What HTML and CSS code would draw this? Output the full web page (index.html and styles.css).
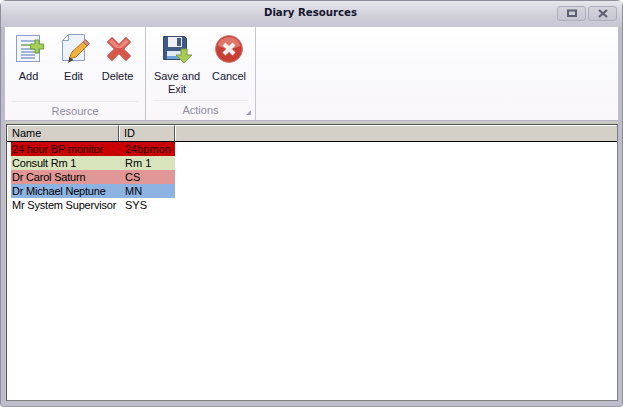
FILE: index.html
```html
<!DOCTYPE html>
<html lang="en">
<head>
<meta charset="utf-8">
<title>Diary Resources</title>
<link rel="stylesheet" href="styles.css">
</head>
<body>
<div class="window">
  <header class="titlebar">
    <div class="title">Diary Resources</div>
    <div class="controls">
      <button class="ctl" aria-label="Maximize"><svg width="12" height="9" viewBox="0 0 12 9"><rect x="2" y="1.500" width="8" height="5.500" fill="none" stroke="#5c6072" stroke-width="2"/></svg></button>
      <button class="ctl" aria-label="Close"><svg width="12" height="9" viewBox="0 0 12 9"><path d="M2 1l8 7M10 1L2 8" stroke="#5c6072" stroke-width="2.2" fill="none"/></svg></button>
    </div>
  </header>
  <div class="client">
    <section class="ribbon">
      <div class="group group-resource">
        <div class="items">
          <div class="item item-add">
            <svg class="icon" width="28" height="28" viewBox="0 0 28 28">
              <rect x="0.500" y="0.500" width="23" height="26" fill="#f3f6fc" stroke="#8a9fca"/>
              <path d="M5 6h14M5 14h14M5 17h14M5 20h14M5 23h14" stroke="#8ba0ce" stroke-width="1.300"/>
              <path d="M5 10h12" stroke="#5a9a3a" stroke-width="1.300"/>
              <path d="M19 5h4v4h4.500v5H23v4h-4v-4h-4.500V9H19z" fill="#a4d05a" stroke="#6d9a3a"/>
            </svg>
            <span class="label">Add</span>
          </div>
          <div class="item item-edit">
            <svg class="icon" width="28" height="30" viewBox="0 0 28 30">
              <path d="M6.500 0.500H22.500V26.500H0.500V6.500z" fill="#eef3fb" stroke="#8a9fca"/>
              <path d="M6.500 0.500v6h-6z" fill="#fff" stroke="#8a9fca"/>
              <path d="M7 25l3-7L21 8l4 4-11 11z" fill="#f2b23e" stroke="#a8742a"/>
              <path d="M21 8l2.500-2.500 4 4L25 12z" fill="#dc8a80" stroke="#a07060"/>
              <path d="M6 29l1.500-6 4 3z" fill="#444"/>
            </svg>
            <span class="label">Edit</span>
          </div>
          <div class="item item-delete">
            <svg class="icon" width="26" height="26" viewBox="0 0 26 26">
              <path d="M1 6l5-5 7 7 7-7 5 5-7 7 7 7-5 5-7-7-7 7-5-5 7-7z" fill="#d9574a" stroke="#c9867d"/>
              <path d="M3 6l3-3 7 7 7-7 3 3-7 6h-6z" fill="#e9877a"/>
            </svg>
            <span class="label">Delete</span>
          </div>
        </div>
        <div class="caption">Resource</div>
      </div>
      <div class="group group-actions">
        <div class="items">
          <div class="item item-save">
            <svg class="icon" width="30" height="27" viewBox="0 0 30 27">
              <path d="M0.500 0.500h21l2 2v21h-23z" fill="#3f5a85" stroke="#34476a"/>
              <rect x="5" y="1" width="14" height="10" fill="#eef0f4"/>
              <rect x="14" y="2" width="4" height="8" fill="#3f5a85"/>
              <rect x="4" y="15" width="17" height="8" fill="#dfe8f3"/>
              <path d="M4 20h17v3H4z" fill="#6ea4dc"/>
              <path d="M18 13h6v6h5l-8 8-8-8h5z" fill="#a6cc55" stroke="#7a9c42"/>
            </svg>
            <span class="label">Save and<br>Exit</span>
          </div>
          <div class="item item-cancel">
            <svg class="icon" width="28" height="28" viewBox="0 0 28 28">
              <circle cx="14" cy="14" r="13.500" fill="#c93f36" stroke="#c9817a"/>
              <path d="M3 11a11 9 0 0 1 22 0a14 6 0 0 1-22 0z" fill="#e0756a"/>
              <path d="M7.500 10.500l3-3 3.500 3.500 3.500-3.500 3 3-3.500 3.500 3.500 3.500-3 3-3.500-3.500-3.500 3.500-3-3 3.500-3.500z" fill="#f4eeee"/>
            </svg>
            <span class="label">Cancel</span>
          </div>
        </div>
        <div class="caption">Actions<span class="launcher"></span></div>
      </div>
    </section>
    <section class="grid">
      <div class="head">
        <div class="hcell col-name">Name</div>
        <div class="hcell col-id">ID</div>
        <div class="hcell col-rest"></div>
      </div>
      <div class="rows">
        <div class="row row-red"><span class="cell-name">24 hour BP monitor</span><span class="cell-id">24bpmon</span></div>
        <div class="row row-green"><span class="cell-name">Consult Rm 1</span><span class="cell-id">Rm 1</span></div>
        <div class="row row-pink"><span class="cell-name">Dr Carol Saturn</span><span class="cell-id">CS</span></div>
        <div class="row row-blue"><span class="cell-name">Dr Michael Neptune</span><span class="cell-id">MN</span></div>
        <div class="row"><span class="cell-name">Mr System Supervisor</span><span class="cell-id">SYS</span></div>
      </div>
    </section>
  </div>
</div>
</body>
</html>
```
FILE: styles.css
```css
* { box-sizing: border-box; }
html, body { margin: 0; padding: 0; }
body { width: 623px; height: 407px; overflow: hidden; background: #fff; font-family: "Liberation Sans", sans-serif; font-size: 11px; color: #000; }
.window { width: 623px; height: 407px; display: flex; flex-direction: column; background: #bdbcca; border-radius: 6px 6px 4px 4px; padding: 0 4px 5px 4px; border: 1px solid #8f8f9a; border-bottom-color: #9a9aa6; }
.titlebar { height: 26px; flex: none; display: flex; align-items: center; justify-content: flex-end; position: relative; background: linear-gradient(#e6e6ec, #cfced9 60%, #c6c5d2); margin: 0 -4px; padding: 0 4px 0 0; }
.title { position: absolute; left: -1px; right: 1px; top: 6px; text-align: center; font-family: "DejaVu Sans", sans-serif; font-weight: bold; font-size: 10.200px; color: #15152e; }
.controls { display: flex; gap: 2px; margin-right: 1px; margin-top: -1px; }
.ctl { width: 29px; height: 15px; padding: 0; display: flex; align-items: center; justify-content: center; border: 1px solid #aeaeba; border-radius: 3px; background: linear-gradient(#d4d4dc, #c6c6d2); }
.client { flex: 1; display: flex; flex-direction: column; min-height: 0; background: #c9c8c4; }
.ribbon { height: 94px; flex: none; display: flex; background: linear-gradient(#fff 0, #f9f9fe 50%, #fbf6fa 100%); border-bottom: 1px solid #b5b4c0; }
.group { display: flex; flex-direction: column; border-right: 1px solid #c6c6d0; }
.group-resource { width: 141px; }
.group-actions { width: 110px; }
.items { flex: 1; display: flex; padding-top: 7px; }
.item { display: flex; flex-direction: column; align-items: center; text-align: center; }
.item-add { width: 45px; margin-left: 1px; }
.item-edit { width: 45px; }
.item-delete { width: 45px; margin-left: -1px; }
.item-save { width: 60px; margin-left: 1px; }
.item-cancel { width: 44px; }
.icon { display: block; flex: none; }
.item-add .icon { margin: 1px 0 1px 3px; }
.item-edit .icon { margin-left: 4px; }
.item-delete .icon { margin: 2px 0 2px 3px; }
.item-save .icon { margin: 2px 0 1px 2px; }
.item-cancel .icon { margin: 1px 1px 1px 0; }
.label { margin-top: 6px; line-height: 13px; font-size: 11px; letter-spacing: -0.050px; color: #15152e; }
.caption { height: 20px; margin: 0 7px; border-top: 1px solid #e8e8ee; text-align: center; font-size: 11px; line-height: 19px; color: #8c8c9e; position: relative; }
.group-resource .caption { height: 19px; }
.launcher { position: absolute; right: -3px; bottom: 5px; width: 0; height: 0; border-style: solid; border-width: 0 0 5px 5px; border-color: transparent transparent #a0a0ae transparent; }
.grid { flex: 1; min-height: 0; margin-top: 3px; background: #fff; border: 1px solid #7f7f7f; border-left-color: #55554f; border-top-color: #55554f; display: flex; flex-direction: column; margin-left: 1px; }
.head { display: flex; height: 17px; flex: none; background: #d4d0c8; border-bottom: 1px solid #000; }
.hcell { border-left: 1px solid #fff; border-top: 1px solid #fff; border-right: 1px solid #55554f; padding-left: 4px; line-height: 15px; font-size: 11px; }
.col-name { width: 112px; }
.col-id { width: 56px; }
.col-rest { flex: 1; border-right: 0; }
.rows { padding-left: 4px; }
.row { display: flex; width: 164px; height: 14px; line-height: 15px; font-size: 11px; white-space: nowrap; }
.cell-name { width: 113px; padding-left: 1px; overflow: hidden; letter-spacing: -0.200px; }
.cell-id { padding-left: 1px; }
.row-red { background: #c80000; color: #300; }
.row-green { background: #d8e4bc; }
.row-pink { background: #e09796; }
.row-blue { background: #8db3e2; }
```
